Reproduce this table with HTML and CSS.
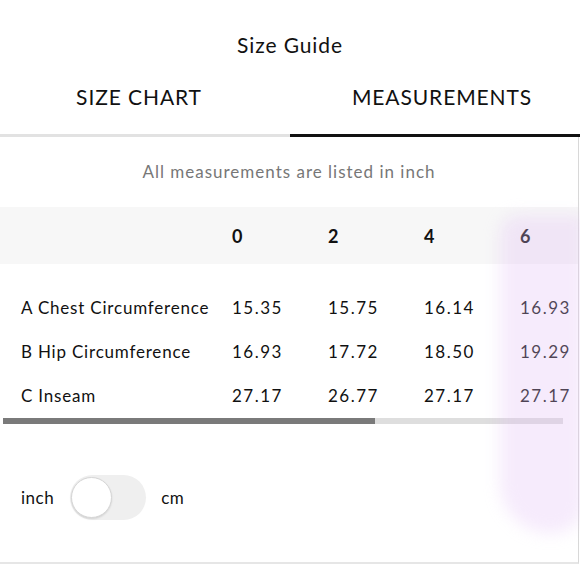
FILE: index.html
```html
<!DOCTYPE html>
<html>
<head>
<meta charset="utf-8">
<link rel="stylesheet" href="styles.css">
</head>
<body>
<div class="page">
  <h1 class="title">Size Guide</h1>
  <div class="tabs">
    <div class="tab">SIZE CHART</div>
    <div class="tab active">MEASUREMENTS</div>
  </div>
  <div class="panel">
    <p class="note">All measurements are listed in inch</p>
    <div class="table">
      <div class="row head">
        <div class="label"></div>
        <div class="cell">0</div>
        <div class="cell">2</div>
        <div class="cell">4</div>
        <div class="cell">6</div>
      </div>
      <div class="row">
        <div class="label">A Chest Circumference</div>
        <div class="cell">15.35</div>
        <div class="cell">15.75</div>
        <div class="cell">16.14</div>
        <div class="cell">16.93</div>
      </div>
      <div class="row">
        <div class="label">B Hip Circumference</div>
        <div class="cell">16.93</div>
        <div class="cell">17.72</div>
        <div class="cell">18.50</div>
        <div class="cell">19.29</div>
      </div>
      <div class="row">
        <div class="label">C Inseam</div>
        <div class="cell">27.17</div>
        <div class="cell">26.77</div>
        <div class="cell">27.17</div>
        <div class="cell">27.17</div>
      </div>
    </div>
    <div class="scrollbar"><div class="thumb"></div></div>
    <div class="units">
      <span class="unit">inch</span>
      <span class="switch"><span class="knob"></span></span>
      <span class="unit">cm</span>
    </div>
  </div>
  <div class="haze"></div>
</div>
</body>
</html>
```
FILE: styles.css
```css
* { box-sizing: border-box; }
html, body { margin: 0; padding: 0; background: #fff; }
body {
  font-family: Lato, "Noto Sans", sans-serif;
  color: #111;
  width: 580px;
  height: 580px;
  overflow: hidden;
}
.page { position: relative; width: 580px; }
.title {
  margin: 33px 0 0;
  font-size: 21px;
  line-height: 24px;
  font-weight: 400;
  text-align: center;
  letter-spacing: 0.9px;
}
.tabs {
  display: grid;
  grid-template-columns: 290px 290px;
}
.tab {
  padding: 27px 0 24px;
  font-size: 21px;
  line-height: 26px;
  letter-spacing: 0.9px;
  text-align: center;
  border-bottom: 3px solid #e2e2e2;
}
.tab:first-child { padding-right: 12px; }
.tab.active { border-bottom-color: #111; padding-left: 14px; }
.panel {
  width: 579px;
  height: 427px;
  border-right: 1px solid #d8d8d8;
  border-bottom: 2px solid #e6e6e6;
  padding-top: 24px;
}
.note {
  margin: 0;
  font-size: 17px;
  line-height: 22px;
  color: #777;
  text-align: center;
  letter-spacing: 1px;
}
.table { margin-top: 24px; }
.row {
  display: grid;
  grid-template-columns: 232px 96px 96px 96px 58px;
  height: 44px;
  align-items: center;
  font-size: 17px;
  letter-spacing: 0.8px;
}
.row.head {
  height: 57px;
  background: #f7f7f7;
  margin-bottom: 21px;
  font-weight: 700;
}
.label { padding-left: 21px; white-space: nowrap; }
.cell { white-space: nowrap; letter-spacing: 1.5px; }
.head .cell { letter-spacing: 0; font-size: 18px; }
.scrollbar {
  margin: 1px 15px 0 3px;
  height: 6px;
  background: #dedede;
}
.thumb {
  width: 372px;
  height: 6px;
  background: #7a7a7a;
}
.units {
  margin-top: 51px;
  display: flex;
  align-items: center;
  padding-left: 21px;
  font-size: 17px;
  letter-spacing: 0.5px;
}
.unit { line-height: 20px; }
.switch {
  margin: 0 15px 0 16px;
  width: 76px;
  height: 45px;
  border-radius: 23px;
  background: #efefef;
  display: flex;
  align-items: center;
  padding-left: 1px;
}
.knob {
  width: 41px;
  height: 41px;
  border-radius: 50%;
  background: #fff;
  border: 1px solid #d6d6d6;
  box-shadow: 0 1px 2px rgba(0,0,0,0.12);
}
.haze {
  position: absolute;
  left: 500px;
  top: 182px;
  width: 84px;
  height: 318px;
  background: rgba(225, 190, 245, 0.3);
  border-radius: 20px 0 30px 50px;
  filter: blur(8px);
  pointer-events: none;
}
```
